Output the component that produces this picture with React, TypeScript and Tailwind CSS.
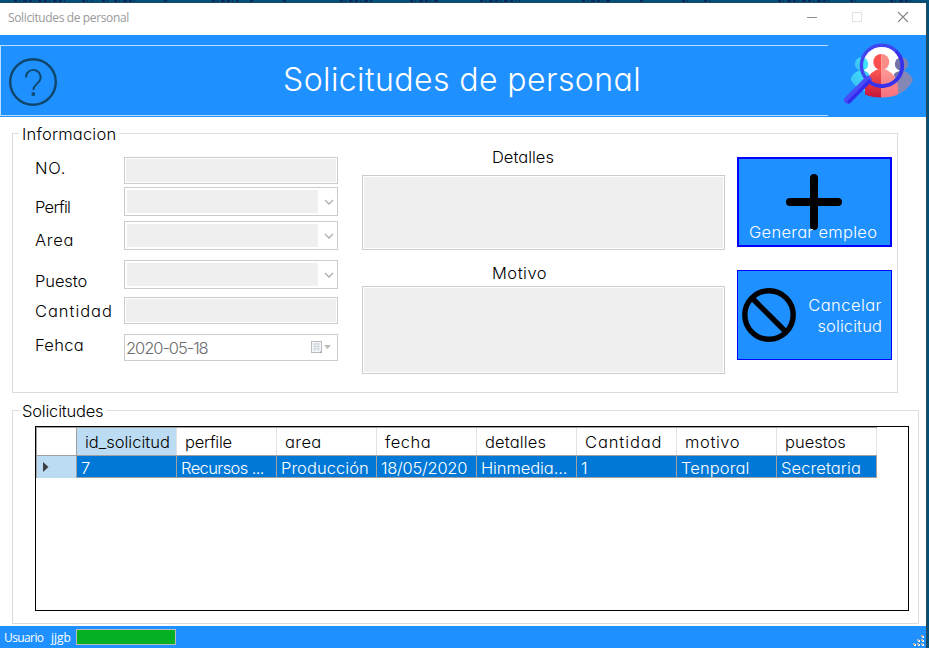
import type { ReactNode } from "react";

const columns = [
  { name: "id_solicitud", value: "7", nameClass: "", valueClass: "" },
  { name: "perfile", value: "Recursos ...", nameClass: "tracking-[-0.25px]", valueClass: "tracking-[-0.6px]" },
  { name: "area", value: "Producción", nameClass: "tracking-[0.4px]", valueClass: "tracking-[0.05px]" },
  { name: "fecha", value: "18/05/2020", nameClass: "tracking-[0.5px]", valueClass: "tracking-[-0.25px]" },
  { name: "detalles", value: "Hinmedia...", nameClass: "tracking-[0.15px]", valueClass: "tracking-[-0.1px]" },
  { name: "Cantidad", value: "1", nameClass: "tracking-[0.9px]", valueClass: "" },
  { name: "motivo", value: "Tenporal", nameClass: "tracking-[0.6px]", valueClass: "tracking-[0.1px]" },
  { name: "puestos", value: "Secretaria", nameClass: "", valueClass: "tracking-[0.1px]" },
];

function TextField({ className }: { className: string }) {
  return (
    <div className={`border border-[#cccccc] bg-white p-px ${className}`}>
      <div className="h-full w-full bg-[#efefef]" />
    </div>
  );
}

function ComboField({ className }: { className: string }) {
  return (
    <div className={`flex h-[29px] items-center border border-[#cccccc] bg-white pl-0.5 ${className}`}>
      <div className="h-[23px] w-[191px] bg-[#efefef]" />
      <svg className="ml-1.5 h-2.5 w-2.5" viewBox="0 0 10 10" fill="none" stroke="#adadad" strokeWidth="1.3">
        <path d="M1 3 L5 7 L9 3" />
      </svg>
    </div>
  );
}

function Label({ children, className }: { children: ReactNode; className: string }) {
  return <div className={`h-[22px] leading-[22px] whitespace-nowrap ${className}`}>{children}</div>;
}

function PeopleSearchIcon() {
  return (
    <svg className="h-20 w-20" viewBox="0 0 80 80">
      <defs>
        <linearGradient id="cyan" x1="0" y1="1" x2="1" y2="0">
          <stop offset="0" stopColor="#39b8f2" />
          <stop offset="1" stopColor="#40e4fa" />
        </linearGradient>
        <linearGradient id="red" x1="0" y1="0" x2="0" y2="1">
          <stop offset="0" stopColor="#ff5a52" />
          <stop offset="1" stopColor="#c4153a" />
        </linearGradient>
        <linearGradient id="pink" x1="0" y1="0" x2="0" y2="1">
          <stop offset="0" stopColor="#fd9a94" />
          <stop offset="1" stopColor="#f7707f" />
        </linearGradient>
        <clipPath id="lens">
          <circle cx="41.7" cy="29.5" r="20" />
        </clipPath>
      </defs>
      <circle cx="21.5" cy="28" r="6.7" fill="url(#cyan)" />
      <path d="M10.5 43.5 Q14 34.5 21 34.5 L30 34.5 L30 57 Q17 55 10.5 43.5Z" fill="url(#cyan)" />
      <circle cx="61.5" cy="28" r="6.7" fill="#8081b0" />
      <path d="M53 34.5 L62 34.5 Q69 35 73 44 Q68 55 54 60Z" fill="#8588b4" />
      <circle cx="41.7" cy="29.5" r="20" fill="#fff" />
      <g clipPath="url(#lens)">
        <circle cx="21.5" cy="28" r="6.7" fill="#40e4fa" />
        <circle cx="61.5" cy="28" r="6.7" fill="#7673a8" />
        <path d="M15 34.5 H23 Q28 35 30 40 L26 52 L16 52Z" fill="#40cef5" />
        <path d="M54 38 Q57 34.5 65 34.5 V50 H55Z" fill="#7673a8" />
      </g>
      <path d="M25 58.5 V51 Q26 39 36 34 Q38 33 41 33 V61.5 Q31 61.5 25 58.5Z" fill="url(#red)" />
      <path d="M41 33 Q45 33 47 34 Q57 39 58 51 V58.5 Q51 61.5 41 61.5Z" fill="url(#pink)" />
      <path d="M41.3 18 V34 A8 8 0 0 1 41.3 18Z" fill="#fb4f4d" />
      <path d="M41.3 18 A8 8 0 0 1 41.3 34Z" fill="#fd8d89" />
      <circle cx="41.7" cy="29.5" r="20.3" fill="none" stroke="#4045ef" strokeWidth="3.4" />
      <path d="M56 15.2 A20.3 20.3 0 0 1 29 45.5" fill="none" stroke="#3731ec" strokeWidth="3.4" />
      <path d="M7.5 64 L28 43.5" stroke="#4a4cf5" strokeWidth="7" strokeLinecap="round" />
      <path d="M9 65.8 L29.5 45.3" stroke="#352bef" strokeWidth="3.6" strokeLinecap="round" />
    </svg>
  );
}

function TitleBar() {
  return (
    <div className="flex h-8 items-center pl-2 font-['Open_Sans','Noto_Sans',sans-serif] text-[12px] font-normal text-[#999999]">
      <span className="-mt-0.5 w-[799px] tracking-[-0.37px]">Solicitudes de personal</span>
      <svg className="-mt-1 h-4 w-[102px]" viewBox="0 0 102 16" fill="none">
        <path d="M0 8.5 H10" stroke="#8f8f8f" />
        <rect x="45.5" y="3.5" width="9" height="9" stroke="#e3e3e3" />
        <path d="M91 3 L101 13 M101 3 L91 13" stroke="#888888" strokeWidth="1.1" />
      </svg>
    </div>
  );
}

function Header() {
  return (
    <div className="flex h-[82px] bg-[#1e90ff] pt-2.5">
      <div className="flex h-[71px] w-[828px] border-y border-l border-[#bcdcfb]">
        <svg className="mt-3 ml-[7px] h-[50px] w-[50px]" viewBox="0 0 50 50" fill="none" stroke="#10466a">
          <circle cx="25" cy="24" r="22.8" strokeWidth="2.4" />
          <path d="M18 19.5 A7.3 7.3 0 1 1 30.6 24.2 C28 27 25.3 28 25.3 32" strokeWidth="1.9" />
          <rect x="24.4" y="35.2" width="1.8" height="1.8" strokeWidth="1.5" />
        </svg>
        <h1 className="mt-3.5 ml-[225px] h-10 text-[32px] leading-10 font-light tracking-[0.42px] whitespace-nowrap text-white">
          Solicitudes de personal
        </h1>
      </div>
      <div className="-mt-[9px] ml-3">
        <PeopleSearchIcon />
      </div>
    </div>
  );
}

function InfoForm() {
  return (
    <fieldset className="ml-3 h-[270px] w-[886px] border border-[#dcdcdc]">
      <legend className="ml-1.5 h-[21px] w-[100px] pl-[3px] leading-[22px] tracking-[0.2px] whitespace-nowrap">
        Informacion
      </legend>
      <div className="flex pt-[2px]">
        <div className="mt-[11px] ml-[22px] w-[89px]">
          <Label className="tracking-[0.7px]">NO.</Label>
          <Label className="mt-[17px] tracking-[-0.7px]">Perfil</Label>
          <Label className="mt-[11px] tracking-[0.7px]">Area</Label>
          <Label className="mt-[19px] tracking-[-0.1px]">Puesto</Label>
          <Label className="mt-2 tracking-[0.95px]">Cantidad</Label>
          <Label className="mt-3 tracking-[0.3px]">Fehca</Label>
        </div>
        <div className="mt-[11px] w-[214px]">
          <TextField className="h-[27px]" />
          <ComboField className="mt-[3px]" />
          <ComboField className="mt-[5px]" />
          <ComboField className="mt-[10px]" />
          <TextField className="mt-2 h-[27px]" />
          <div className="mt-[10px] flex h-[27px] items-center border border-[#cccccc] pl-px text-[#6d6d6d]">
            <span className="w-[184px] pt-0.5 tracking-[-1.05px]">2020-05-18</span>
            <svg className="-mt-px h-4 w-6" viewBox="0 0 24 16">
              <rect x="1.5" y="2.5" width="10" height="11" fill="#f4f6f8" stroke="#bdbdbd" />
              <path d="M3 5h7M3 7.5h7M3 10h7M5 4v8M8 4v8" stroke="#c8d2dc" strokeWidth=".8" />
              <path d="M9 14 L12 11 V14Z" fill="#aaaaaa" />
              <path d="M14 6 H21 L17.5 10Z" fill="#bdbdb5" />
            </svg>
          </div>
        </div>
        <div className="ml-6 w-[363px]">
          <Label className="ml-[130px]">Detalles</Label>
          <TextField className="mt-[7px] h-[75px]" />
          <Label className="mt-3 ml-[130px] tracking-[0.5px]">Motivo</Label>
          <TextField className="mt-[2px] h-[88px]" />
        </div>
        <div className="mt-[11px] ml-3 w-[155px] text-white">
          <button className="relative block h-[90px] w-full border-2 border-[#0000ff] bg-[#1e90ff]">
            <svg className="ml-[47px] h-14 w-14" viewBox="0 0 56 56" stroke="#000" strokeWidth="8" strokeLinecap="round">
              <path d="M28 4V52M4 28H52" />
            </svg>
            <span className="absolute bottom-0.5 left-2.5 leading-[22px] tracking-[0.28px] whitespace-nowrap">
              Generar empleo
            </span>
          </button>
          <button className="mt-[23px] flex h-[90px] w-full items-center border border-[#0000ff] bg-[#1e90ff] pr-[9px] pl-1">
            <svg className="h-[54px] w-[54px] shrink-0" viewBox="0 0 54 54" fill="none" stroke="#000" strokeWidth="5.4">
              <circle cx="27" cy="27" r="24.2" />
              <path d="M10 10 L44 44" />
            </svg>
            <span className="mt-0.5 ml-auto text-right leading-[21px]">
              <span className="tracking-[0.45px]">Cancelar</span>
              <br />
              <span className="tracking-[0.1px]">solicitud</span>
            </span>
          </button>
        </div>
      </div>
    </fieldset>
  );
}

function RequestsTable() {
  return (
    <fieldset className="mt-[7px] ml-3 h-[224px] w-[907px] border border-[#dcdcdc]">
      <legend className="ml-1.5 h-[21px] w-[88px] pl-[3px] leading-[22px] tracking-[-0.2px] whitespace-nowrap">
        Solicitudes
      </legend>
      <div className="mt-[5px] ml-[22px] h-[185px] w-[874px] border border-black">
        <div className="w-[841px] border-t border-l border-[#a0a0a0]">
          <div className="flex h-7 border-b border-[#a0a0a0]">
            <div className="w-10 border-r border-[#a0a0a0]" />
            {columns.map((column, index) => (
              <div
                key={column.name}
                className={`w-[100px] border-r border-[#e2e2e2] pl-2 leading-[28px] whitespace-nowrap ${column.nameClass} ${index === 0 ? "bg-[#bcdcf4]" : ""}`}
              >
                {column.name}
              </div>
            ))}
          </div>
          <div className="flex h-[22px] text-white">
            <div className="flex w-10 items-center border-r border-[#a0a0a0] bg-[#bcdcf4] pl-1.5">
              <svg className="h-2.5 w-1.5" viewBox="0 0 6 10">
                <path d="M0 0 L5.5 5 L0 10Z" fill="#404040" />
              </svg>
            </div>
            {columns.map((column) => (
              <div
                key={column.name}
                className={`w-[100px] border-r border-b border-[#a0a0a0] bg-[#0078d7] pl-1 leading-[24px] whitespace-nowrap ${column.valueClass}`}
              >
                {column.value}
              </div>
            ))}
          </div>
        </div>
      </div>
    </fieldset>
  );
}

function StatusBar() {
  return (
    <div className="mt-0.5 flex h-[22px] items-center bg-[#1e90ff] pl-1 font-['Open_Sans','Noto_Sans',sans-serif] text-[12px] font-normal text-white">
      <span className="mt-0.5 w-[47px] tracking-[-0.6px]">Usuario</span>
      <span className="mt-0.5 w-[25px]">jjgb</span>
      <div className="h-4 w-[100px] border border-[#bcbcbc] bg-[#06b025]" />
      <svg className="mt-2 ml-auto h-[14px] w-[13px]" viewBox="0 0 13 14">
        {[[8, 1], [4, 5], [8, 5], [0, 9], [4, 9], [8, 9]].map(([x, y]) => (
          <g key={`${x}-${y}`}>
            <rect x={x + 1} y={y + 1} width="2" height="2" fill="#fff" />
            <rect x={x} y={y} width="2" height="2" fill="#b3b3b3" />
          </g>
        ))}
      </svg>
    </div>
  );
}

export default function App() {
  return (
    <div className="h-[648px] w-[929px] overflow-hidden bg-[#00507a] font-['Inter','Lato',sans-serif] text-[16.5px] font-light text-black [font-feature-settings:'cv11','ss03']">
      <svg className="block h-[3px] w-full" viewBox="0 0 929 3" preserveAspectRatio="none">
        <path
          d="M14 1H66M82 1H92M102 1H110M114 1H138M164 1H167M212 1H238M250 1H254M283 1H288M340 1H372M410 1H438M480 1H520M582 1H612M640 1H644M682 1H688M704 1H712M778 1H830M850 1H856M890 1H912"
          stroke="#0b2a5c"
          strokeWidth="2"
          strokeDasharray="3 2 1 3 4 2"
        />
        <path d="M0 2.5H926" stroke="#1d4a66" />
      </svg>
      <div className="h-[645px] w-[927px] border-r border-[#2b4a5e] bg-white">
        <TitleBar />
        <Header />
        <div className="pt-1.5">
          <InfoForm />
          <RequestsTable />
        </div>
        <StatusBar />
      </div>
    </div>
  );
}
